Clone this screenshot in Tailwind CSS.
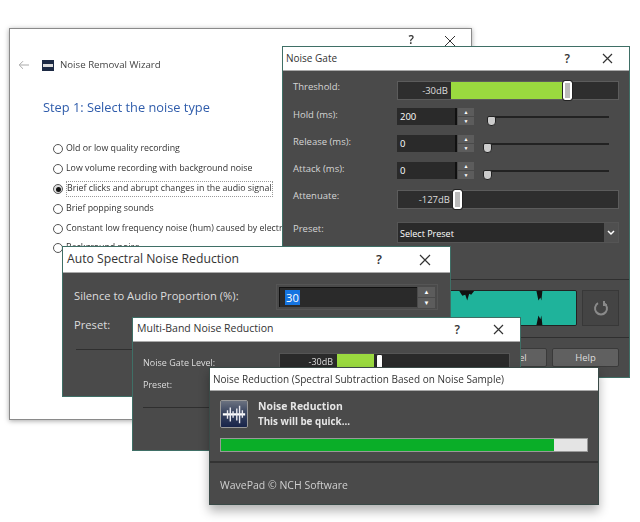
<!DOCTYPE html>
<html lang="en">

<head>
    <meta charset="UTF-8">
    <title>Noise Reduction</title>
    <script src="https://cdn.jsdelivr.net/npm/@tailwindcss/browser@4"></script>
    <meta name="viewport" content="width=device-width, initial-scale=1.0">
</head>

<body class="bg-white font-['Open_Sans',sans-serif]">
    <div class="relative w-[640px] h-[522px] overflow-hidden blur-[0.6px]">

        <!-- wizard window -->
        <div class="absolute left-[9px] top-[28px] w-[463px] h-[392px] bg-white border border-[#8a8a8a] shadow-[0_1px_5px_rgba(0,0,0,0.35)]">
            <div class="flex justify-end gap-[30px] pr-[15px] pt-[5px] h-[20px] text-[#333] text-[12px] leading-none">
                <span class="font-semibold">?</span>
                <svg class="w-[12px] h-[12px] mt-px" viewBox="0 0 12 12"><path d="M1 1l10 10M11 1L1 11" stroke="#333" fill="none"/></svg>
            </div>
            <div class="flex items-center h-[20px] mt-[6px] pl-[8px]">
                <svg class="w-[12px] h-[10px]" viewBox="0 0 12 10"><path d="M11 5H1.5M5 1.2L1.2 5 5 8.8" stroke="#aaa" fill="none"/></svg>
                <div class="w-[12px] h-[11px] ml-[12px] bg-[#1d2a44] flex items-center justify-center"><div class="w-[10px] h-[3px] bg-[#ddd]"></div></div>
                <span class="ml-[6px] text-[9.7px] text-[#444]">Noise Removal Wizard</span>
            </div>
            <div class="pl-[33px] mt-[22px] text-[12.8px] leading-[20px] text-[#2f5cab]">Step 1: Select the noise type</div>
            <div class="pl-[43px] mt-[22px] flex flex-col text-[8.8px] text-[#333] whitespace-nowrap">
                <div class="flex items-center h-[20px] gap-[3px]"><span class="w-[10px] h-[10px] rounded-full border border-[#555] bg-white"></span>Old or low quality recording</div>
                <div class="flex items-center h-[20px] gap-[3px]"><span class="w-[10px] h-[10px] rounded-full border border-[#555] bg-white"></span>Low volume recording with background noise</div>
                <div class="flex items-center h-[20px] gap-[3px]"><span class="w-[10px] h-[10px] rounded-full border border-[#555] bg-[#ddd] flex items-center justify-center"><span class="w-[5px] h-[5px] rounded-full bg-[#111]"></span></span><span class="border border-dotted border-[#999]">Brief clicks and abrupt changes in the audio signal</span></div>
                <div class="flex items-center h-[20px] gap-[3px]"><span class="w-[10px] h-[10px] rounded-full border border-[#555] bg-white"></span>Brief popping sounds</div>
                <div class="flex items-center h-[19px] gap-[3px]"><span class="w-[10px] h-[10px] rounded-full border border-[#555] bg-white"></span>Constant low frequency noise (hum) caused by electrical interference</div>
                <div class="flex items-center h-[19px] gap-[3px]"><span class="w-[10px] h-[10px] rounded-full border border-[#555] bg-white"></span>Background noise</div>
            </div>
        </div>

        <!-- noise gate -->
        <div class="absolute left-[282px] top-[46px] w-[348px] h-[332px] bg-[#4a4a4a] border border-[#3f6f66]">
            <div class="flex items-center justify-between h-[24px] bg-white border-b border-[#aaa] pl-[3px] pr-[16px] text-[10px] text-[#333]">
                <span>Noise Gate</span>
                <div class="flex items-center gap-[32px]">
                    <span class="font-semibold text-[12px]">?</span>
                    <svg class="w-[11px] h-[11px]" viewBox="0 0 11 11"><path d="M1 1l9 9M10 1l-9 9" stroke="#333" stroke-width="1.2" fill="none"/></svg>
                </div>
            </div>
            <div class="flex flex-col pl-[10px] pr-[10px] pt-[10px] text-[9.5px] text-[#d5d5d5]">
                <div class="flex items-start h-[19px]">
                    <span class="w-[104px] leading-[11px]">Threshold:</span>
                    <div class="flex flex-1 h-[19px] bg-[#2e2e2e] border border-[#5c5c5c]">
                        <span class="w-[53px] text-right pr-[3px] leading-[17px] text-[#ddd]">-30dB</span>
                        <div class="w-[112px] bg-[#9ad93f]"></div>
                        <div class="w-[9px] -my-px bg-[#bbb] border-2 border-white outline outline-[#222] rounded-[2px]"></div>
                    </div>
                </div>
                <div class="flex items-center h-[17px] mt-[8px]">
                    <span class="w-[104px] -mt-[2px]">Hold (ms):</span>
                    <span class="w-[60px] h-[17px] bg-[#2a2a2a] border-r-2 border-[#111] pl-[3px] leading-[17px] text-white">200</span>
                    <div class="w-[16px] h-[17px] ml-[1px] flex flex-col gap-px">
                        <div class="flex-1 bg-[#5c5c5c] text-[5px] text-center leading-[8px] text-white">▲</div>
                        <div class="flex-1 bg-[#5c5c5c] text-[5px] text-center leading-[8px] text-white">▼</div>
                    </div>
                    <div class="relative ml-[14px] w-[121px] h-[2px] bg-[#222]"><span class="absolute -left-px top-0 w-[9px] h-[10px] rounded-t-[2px] rounded-b-[4px] bg-[#ccc] border border-[#222]"></span></div>
                </div>
                <div class="flex items-center h-[17px] mt-[10px]">
                    <span class="w-[104px] -mt-[2px]">Release (ms):</span>
                    <span class="w-[60px] h-[17px] bg-[#2a2a2a] border-r-2 border-[#111] pl-[3px] leading-[17px] text-white">0</span>
                    <div class="w-[16px] h-[17px] ml-[1px] flex flex-col gap-px">
                        <div class="flex-1 bg-[#5c5c5c] text-[5px] text-center leading-[8px] text-white">▲</div>
                        <div class="flex-1 bg-[#5c5c5c] text-[5px] text-center leading-[8px] text-white">▼</div>
                    </div>
                    <div class="relative ml-[14px] w-[121px] h-[2px] bg-[#222]"><span class="absolute -left-[5px] top-0 w-[9px] h-[10px] rounded-t-[2px] rounded-b-[4px] bg-[#ccc] border border-[#222]"></span></div>
                </div>
                <div class="flex items-center h-[17px] mt-[10px]">
                    <span class="w-[104px] -mt-[2px]">Attack (ms):</span>
                    <span class="w-[60px] h-[17px] bg-[#2a2a2a] border-r-2 border-[#111] pl-[3px] leading-[17px] text-white">0</span>
                    <div class="w-[16px] h-[17px] ml-[1px] flex flex-col gap-px">
                        <div class="flex-1 bg-[#5c5c5c] text-[5px] text-center leading-[8px] text-white">▲</div>
                        <div class="flex-1 bg-[#5c5c5c] text-[5px] text-center leading-[8px] text-white">▼</div>
                    </div>
                    <div class="relative ml-[14px] w-[121px] h-[2px] bg-[#222]"><span class="absolute -left-[5px] top-0 w-[9px] h-[10px] rounded-t-[2px] rounded-b-[4px] bg-[#ccc] border border-[#222]"></span></div>
                </div>
                <div class="flex items-start h-[19px] mt-[11px]">
                    <span class="w-[104px] leading-[11px]">Attenuate:</span>
                    <div class="flex flex-1 h-[19px] bg-[#2e2e2e] border border-[#5c5c5c]">
                        <span class="w-[55px] text-right pr-[3px] leading-[17px] text-[#ddd] whitespace-nowrap">-127dB</span>
                        <div class="w-[9px] -my-px bg-[#bbb] border-2 border-white outline outline-[#222] rounded-[2px]"></div>
                    </div>
                </div>
                <div class="flex items-start h-[21px] mt-[13px]">
                    <span class="w-[104px] leading-[13px]">Preset:</span>
                    <div class="flex flex-1 h-[21px] border border-[#555] bg-[#2a2a2a]">
                        <span class="flex-1 pl-[2px] leading-[21px] text-white text-[9px]">Select Preset</span>
                        <div class="w-[14px] bg-[#4f4f4f] flex items-center justify-center">
                            <svg class="w-[8px] h-[6px]" viewBox="0 0 8 6"><path d="M1 1l3 3 3-3" stroke="#fff" stroke-width="1.5" fill="none"/></svg>
                        </div>
                    </div>
                </div>
                <div class="h-px bg-[#2f2f2f] -mx-[10px] mt-[36px]"></div>
                <div class="flex gap-[5px] mt-[10px] h-[36px] pl-[104px]">
                    <svg class="flex-1 h-[36px] rounded-[2px] border border-[#222]" viewBox="0 0 180 36" preserveAspectRatio="none">
                        <rect width="180" height="36" fill="#1fb39b"/>
                        <path d="M62 0h15l-3 4-2-1-2 7-2-6-3 1zM140 0h6l-1 10-1-3-2 3zM140 36h6l-1-10-1 4-2-4z" fill="#111"/>
                    </svg>
                    <div class="w-[37px] h-[36px] bg-[#444] border border-[#383838] flex items-center justify-center">
                        <svg class="w-[16px] h-[16px]" viewBox="0 0 16 16"><path d="M5 3.2A6 6 0 1 0 11 3.2M11 1v4h3" stroke="#8a8a8a" stroke-width="2" fill="none"/></svg>
                    </div>
                </div>
                <div class="h-px bg-[#2f2f2f] -mx-[10px] mt-[11px]"></div>
                <div class="flex justify-end gap-[5px] mt-[10px]">
                    <div class="w-[80px] h-[19px] bg-[#606060] rounded-[2px] border border-[#3a3a3a] pl-[10px] text-center leading-[17px] text-[#ddd]">Cancel</div>
                    <div class="w-[67px] h-[19px] bg-[#606060] rounded-[2px] border border-[#3a3a3a] text-center leading-[17px] text-[#ddd]">Help</div>
                </div>
            </div>
        </div>

        <!-- auto spectral -->
        <div class="absolute left-[62px] top-[246px] w-[389px] h-[151px] bg-[#4a4a4a] border border-[#3f6f66]">
            <div class="flex items-center justify-between h-[26px] bg-white border-b border-[#aaa] pl-[4px] pr-[19px] text-[12.2px] text-[#333]">
                <span class="-mt-px">Auto Spectral Noise Reduction</span>
                <div class="flex items-center gap-[37px]">
                    <span class="font-semibold text-[13px]">?</span>
                    <svg class="w-[12px] h-[12px]" viewBox="0 0 12 12"><path d="M1 1l10 10M11 1L1 11" stroke="#333" stroke-width="1.2" fill="none"/></svg>
                </div>
            </div>
            <div class="flex items-center mt-[11px] h-[26px] pl-[11px] text-[11.2px] text-[#ddd]">
                <span class="w-[202px] -mt-[2px]">Silence to Audio Proportion (%):</span>
                <div class="flex w-[162px] h-[26px] border border-[#555] p-[2px] gap-px">
                    <div class="flex-1 bg-[#2a2a2a] border-l border-t border-[#111] pl-[5px] leading-[20px]"><span class="bg-[#1574e0] text-white px-px">30</span></div>
                    <div class="w-[17px] flex flex-col gap-px">
                        <div class="flex-1 bg-[#5c5c5c] text-[6px] text-center leading-[10px] text-white">▲</div>
                        <div class="flex-1 bg-[#5c5c5c] text-[6px] text-center leading-[10px] text-white">▼</div>
                    </div>
                </div>
            </div>
            <div class="pl-[11px] mt-[7px] text-[11.2px] text-[#ddd] leading-[15px]">Preset:</div>
            <div class="h-px bg-[#2f2f2f] ml-[13px] mt-[17px]"></div>
        </div>

        <!-- multi-band -->
        <div class="absolute left-[132px] top-[317px] w-[389px] h-[134px] bg-[#4a4a4a] border border-[#3f6f66]">
            <div class="flex items-center justify-between h-[24px] bg-white border-b border-[#aaa] pl-[4px] pr-[16px] text-[10.5px] text-[#333]">
                <span class="-mt-px">Multi-Band Noise Reduction</span>
                <div class="flex items-center gap-[33px]">
                    <span class="font-semibold text-[12px]">?</span>
                    <svg class="w-[11px] h-[11px]" viewBox="0 0 11 11"><path d="M1 1l9 9M10 1l-9 9" stroke="#333" stroke-width="1.2" fill="none"/></svg>
                </div>
            </div>
            <div class="flex items-start mt-[11px] h-[18px] pl-[10px] text-[9px] text-[#ddd]">
                <span class="w-[136px] leading-[20px]">Noise Gate Level:</span>
                <div class="flex w-[231px] h-[18px] bg-[#2a2a2a] border border-[#555]">
                    <span class="w-[56px] text-right pr-[3px] leading-[16px]">-30dB</span>
                    <div class="w-[37px] ml-px bg-[#9ad93f]"></div>
                    <div class="w-[7px] ml-[2px] bg-white border border-[#222] rounded-[2px]"></div>
                </div>
            </div>
            <div class="pl-[10px] mt-[7px] text-[9px] text-[#ddd] leading-[13px]">Preset:</div>
            <div class="h-px bg-[#2f2f2f] ml-[10px] mt-[16px]"></div>
        </div>

        <!-- progress -->
        <div class="absolute left-[209px] top-[367px] w-[390px] h-[138px] bg-[#4a4a4a] border border-[#3a4a47] shadow-[0_6px_10px_rgba(0,0,0,0.3)]">
            <div class="flex items-center h-[23px] bg-white border-b border-[#aaa] pl-[3px] text-[10px] text-[#333] whitespace-nowrap">Noise Reduction (Spectral Subtraction Based on Noise Sample)</div>
            <div class="flex items-center mt-[9px] ml-[10px] h-[28px]">
                <svg class="w-[28px] h-[28px] rounded-[2px] border border-[#999]" viewBox="0 0 28 28">
                    <defs>
                        <linearGradient id="iconBg" x1="0" y1="0" x2="0" y2="1">
                            <stop offset="0" stop-color="#6b7280"/>
                            <stop offset="0.45" stop-color="#3a4560"/>
                            <stop offset="1" stop-color="#18244a"/>
                        </linearGradient>
                    </defs>
                    <rect width="28" height="28" fill="url(#iconBg)"/>
                    <path d="M2 14.5h24" stroke="#fff" stroke-width="2.4"/>
                    <path d="M7 10v9M10 7v15M13 11v7M17 8v13M20 5v19M23 10v8" stroke="#e8e8ee" stroke-width="1.5"/>
                </svg>
                <div class="ml-[10px] flex flex-col font-bold text-[#e6e6e6] leading-[16px]">
                    <span class="text-[10.4px]">Noise Reduction</span>
                    <span class="text-[9.8px]">This will be quick...</span>
                </div>
            </div>
            <div class="flex mt-[10px] mx-[10px] w-[368px] h-[14px] bg-[#e4e4e4] border border-[#999]">
                <div class="w-[333px] bg-[#0aae28]"></div>
            </div>
            <div class="h-[2px] bg-[#333] mt-[9px]"></div>
            <div class="pl-[10px] mt-[14px] text-[10.5px] text-[#cfcfcf] leading-[16px]">WavePad © NCH Software</div>
        </div>
    </div>
</body>

</html>
